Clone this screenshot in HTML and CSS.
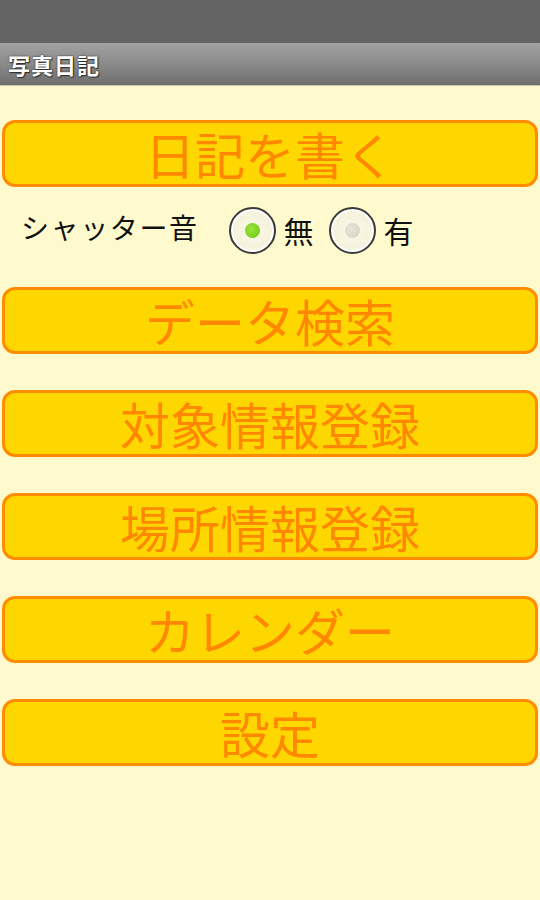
FILE: index.html
```html
<!DOCTYPE html>
<html lang="ja">
<head>
<meta charset="utf-8">
<title>写真日記</title>
<link rel="stylesheet" href="styles.css">
</head>
<body>
<div class="statusbar"></div>
<div class="titlebar"><span class="title">写真日記</span></div>
<main class="content">
  <button class="menu-btn first">日記を書く</button>
  <div class="shutter-row">
    <span class="shutter-label">シャッター音</span>
    <label class="radio-opt">
      <span class="radio checked"><span class="dot"></span></span>
      <span class="radio-text">無</span>
    </label>
    <label class="radio-opt">
      <span class="radio"><span class="dot"></span></span>
      <span class="radio-text">有</span>
    </label>
  </div>
  <button class="menu-btn">データ検索</button>
  <button class="menu-btn">対象情報登録</button>
  <button class="menu-btn">場所情報登録</button>
  <button class="menu-btn">カレンダー</button>
  <button class="menu-btn">設定</button>
</main>
</body>
</html>
```
FILE: styles.css
```css
html, body {
  margin: 0;
  padding: 0;
}
body {
  width: 540px;
  height: 900px;
  background: #fffacd;
  font-family: "Noto Sans CJK JP", "Noto Sans", sans-serif;
  overflow: hidden;
}
.statusbar {
  height: 43px;
  background: #646464;
}
.titlebar {
  height: 42px;
  background: linear-gradient(to bottom, #a2a2a2 0%, #8a8a8a 50%, #6e6e6e 100%);
  border-bottom: 1px solid #c8c6a8;
  display: flex;
  align-items: center;
  padding-left: 8px;
}
.title {
  color: #ffffff;
  font-size: 22px;
  font-weight: 700;
  letter-spacing: 1px;
  text-shadow: 0 0 2px #222, 1px 1px 1px #333;
}
.content {
  display: flex;
  flex-direction: column;
  padding: 34px 2px 0 2px;
}
.menu-btn {
  height: 67px;
  box-sizing: border-box;
  background: #ffd700;
  border: 3px solid #ff8c00;
  border-radius: 13px;
  color: #ff8800;
  font-family: "Noto Sans CJK JP", "Noto Sans", sans-serif;
  font-size: 50px;
  font-weight: 400;
  line-height: 1;
  padding: 0 0 2px 0;
  margin: 0 0 36px 0;
  display: flex;
  align-items: center;
  justify-content: center;
}
.menu-btn.first {
  margin-bottom: 0;
}
.shutter-row {
  height: 100px;
  display: flex;
  align-items: center;
  padding-left: 19px;
  padding-bottom: 14px;
  box-sizing: border-box;
}
.shutter-label {
  font-size: 28px;
  color: #111;
  letter-spacing: 1.6px;
  margin-right: 30px;
  margin-top: -6px;
}
.radio-opt {
  display: flex;
  align-items: center;
  margin-right: 15px;
}
.radio {
  width: 47px;
  height: 47px;
  box-sizing: border-box;
  border-radius: 50%;
  border: 2px solid #3a3a3a;
  background: radial-gradient(circle, #fbf8e6 0%, #f4f1dc 70%, #ffffff 85%);
  box-shadow: inset 0 0 0 2px #ffffff;
  display: flex;
  align-items: center;
  justify-content: center;
}
.dot {
  width: 15px;
  height: 15px;
  border-radius: 50%;
  background: radial-gradient(circle at 40% 40%, #e8e6d8, #d2d0c0);
}
.radio.checked .dot {
  background: radial-gradient(circle at 40% 40%, #9be43a, #6cc414);
}
.radio-text {
  font-size: 30px;
  color: #111;
  margin-left: 8px;
}
```
